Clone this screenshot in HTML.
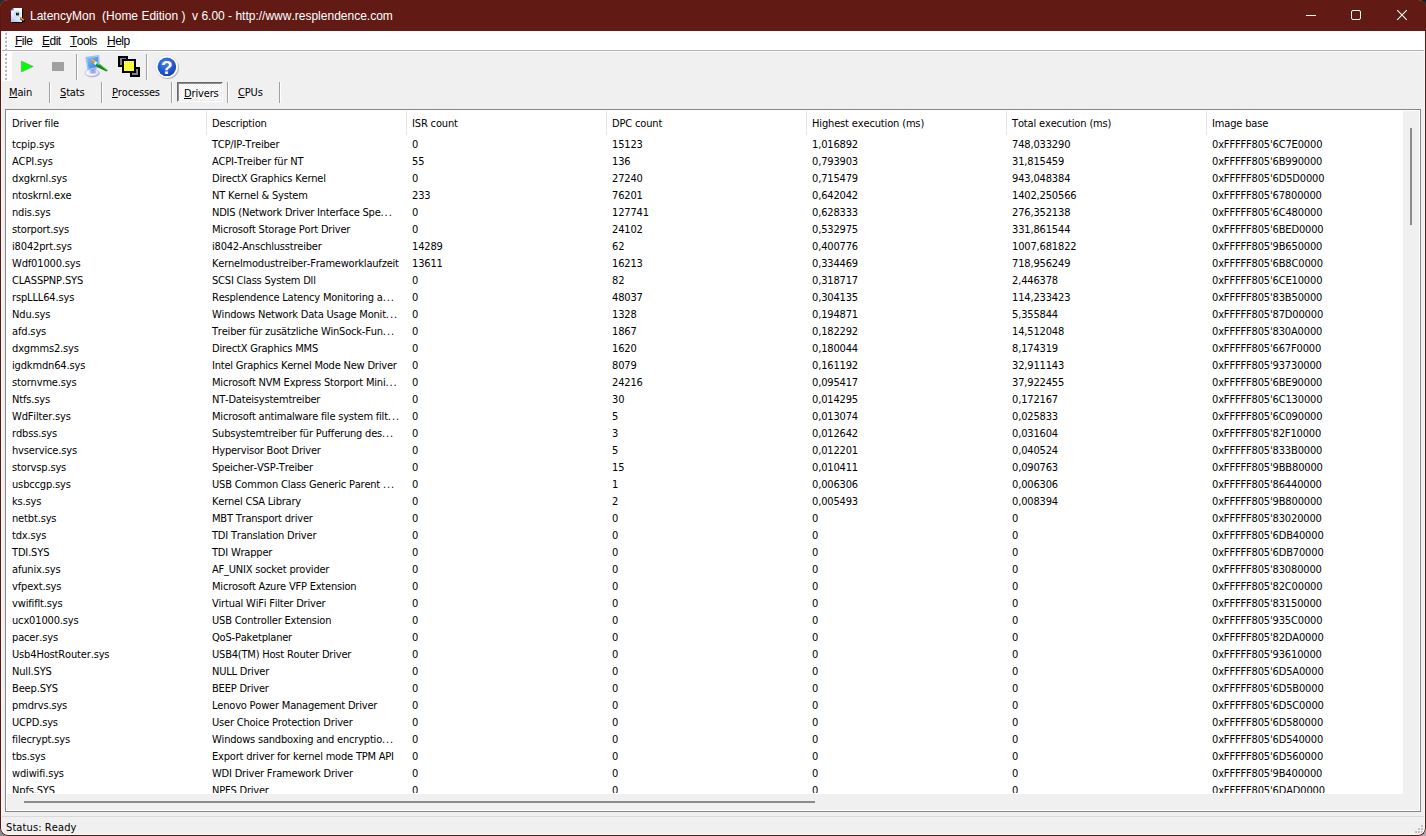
<!DOCTYPE html>
<html lang="de">
<head>
<meta charset="utf-8">
<title>LatencyMon</title>
<style>
html,body{margin:0;padding:0;}
body{width:1426px;height:836px;overflow:hidden;position:relative;background:#f0f0f0;font-family:"DejaVu Sans Condensed","Liberation Sans",sans-serif;font-size:11px;letter-spacing:-0.15px;font-kerning:none;color:#000;}
.corner{position:absolute;width:10px;height:10px;}
#win{position:absolute;left:0;top:0;width:1426px;height:836px;box-sizing:border-box;border-radius:8px;overflow:hidden;background:#f0f0f0;}
#frame{position:absolute;left:0;top:0;width:1426px;height:836px;box-sizing:border-box;border:1px solid #5e150d;border-top:none;border-radius:8px;pointer-events:none;z-index:50;}
#title{position:absolute;left:0;top:0;width:1426px;height:31px;background:#611b14;}
#title .txt{position:absolute;left:30px;top:9px;line-height:15px;font-size:12px;color:#fff;white-space:pre;font-family:"Liberation Sans",sans-serif;letter-spacing:0;}
#menu{position:absolute;left:1px;top:31px;width:1424px;height:19px;background:#fff;}
#menu span{position:absolute;top:3px;line-height:14px;white-space:pre;font-family:"Liberation Sans",sans-serif;font-size:12px;letter-spacing:-0.5px;}
u{text-decoration:underline;text-decoration-thickness:1px;text-underline-offset:1px;text-decoration-skip-ink:none;}
#menuline{position:absolute;left:1px;top:50px;width:1424px;height:1px;background:#b4b4b4;}
#menuline2{position:absolute;left:1px;top:51px;width:1424px;height:1px;background:#fafafa;}
#grip{position:absolute;left:1px;top:51px;width:11px;height:30px;background:#fff;}
.sep{position:absolute;width:1px;background:#a0a0a0;border-right:1px solid #fff;}
#lv{position:absolute;left:5px;top:109px;width:1416px;height:703px;box-sizing:border-box;border:1px solid #828790;background:#fff;}
#lvin{position:absolute;left:1px;top:1px;width:1412px;height:699px;overflow:hidden;background:#fff;}
#hdr{position:absolute;left:0;top:0;width:1395px;height:25px;}
#hdr span{position:absolute;top:4px;line-height:17px;white-space:pre;}
.hs{position:absolute;top:0;width:1px;height:24px;background:#e5e5e5;}
#rows{position:absolute;left:0;top:25px;width:1396px;height:657px;overflow:hidden;}
.r{position:relative;height:17px;line-height:17px;}
.c{position:absolute;top:0;white-space:pre;}
.e{letter-spacing:0.9px;}
.c0{left:5px}.c1{left:205px;letter-spacing:-0.2px}.c2{left:405px}.c3{left:605px}.c4{left:805px}.c5{left:1005px}.c6{left:1205px}
#vs{position:absolute;left:1396px;top:0;width:16px;height:683px;background:#f0f0f0;}
#vs i{position:absolute;left:7px;top:17px;width:2px;height:97px;background:#8b8b8b;}
#hsb{position:absolute;left:0;top:683px;width:1412px;height:16px;background:#f0f0f0;}
#hsb i{position:absolute;left:17px;top:7px;width:791px;height:2px;background:#8b8b8b;}
#stline{position:absolute;left:2px;top:816px;width:1422px;height:1px;background:#dadada;}
#status{position:absolute;left:6px;top:820px;letter-spacing:0.1px;line-height:15px;white-space:pre;}
.tab{position:absolute;top:85px;line-height:15px;white-space:pre;}
</style>
</head>
<body>
<div class="corner" style="left:0;top:0;background:#2b2b2b"></div>
<div class="corner" style="right:0;top:0;background:#1e1e1e"></div>
<div class="corner" style="left:0;bottom:0;background:#8c8c8c"></div>
<div class="corner" style="right:0;bottom:0;background:#b0b0b0"></div>
<div id="win">
<div id="title"><span class="txt">LatencyMon  (Home Edition )  v 6.00 - http://www.resplendence.com</span>
<svg style="position:absolute;left:0;top:0" width="40" height="31" viewBox="0 0 40 31">
<defs><linearGradient id="pg" x1="0.7" y1="0" x2="0.2" y2="1"><stop offset="0" stop-color="#ffffff"/><stop offset="0.5" stop-color="#eef3ff"/><stop offset="1" stop-color="#b4c6f7"/></linearGradient></defs>
<rect x="12" y="9" width="11" height="13.8" fill="#000"/>
<path d="M13.5 8 L22 8 L22 22 L11 22 L11 10.5 Z" fill="url(#pg)"/>
<path d="M11 10.6 L13.6 8 L13.6 10.6 Z" fill="#3f7fe6"/>
<circle cx="17.2" cy="14" r="3" fill="#dff6fb" stroke="#a6d6e8" stroke-width="0.7"/>
<rect x="16" y="12.5" width="2.9" height="3" rx="0.7" fill="#161616"/><rect x="17" y="12.3" width="0.9" height="1" fill="#dff6fb"/>
<path d="M21 18.6 L24 21" stroke="#000" stroke-width="2" stroke-linecap="round"/>
<path d="M20.2 17.4 L23.2 19.8" stroke="#eea11e" stroke-width="1.6" stroke-linecap="round"/>
<path d="M19.2 16.4 L20.2 17.3" stroke="#f3e3c0" stroke-width="1.1"/>
</svg>
<svg style="position:absolute;left:1296px;top:0" width="130" height="31" viewBox="0 0 130 31" fill="none" stroke="#fff" stroke-width="1">
<path d="M10 15.5 H20"/>
<rect x="55.5" y="10.5" width="9" height="9" rx="1.5"/>
<path d="M101.2 10.2 L110.8 19.8 M110.8 10.2 L101.2 19.8" stroke-width="1.1"/>
</svg>

</div>
<div id="menu"><span style="left:14px"><u>F</u>ile</span><span style="left:41px"><u>E</u>dit</span><span style="left:69px"><u>T</u>ools</span><span style="left:106px"><u>H</u>elp</span></div>
<div id="menuline"></div><div id="menuline2"></div>
<div id="grip"></div>
<svg style="position:absolute;left:0;top:0;z-index:3" width="200" height="84" viewBox="0 0 200 84">
<defs>
<pattern id="chk" x="124" y="61" width="2" height="2" patternUnits="userSpaceOnUse"><rect width="2" height="2" fill="#ffff00"/><rect width="1" height="1" fill="#fff"/></pattern>
<radialGradient id="hb" cx="0.42" cy="0.3" r="0.85"><stop offset="0" stop-color="#4a82ea"/><stop offset="0.55" stop-color="#2257cc"/><stop offset="1" stop-color="#12358f"/></radialGradient>
<linearGradient id="scr" x1="0" y1="0" x2="1" y2="1"><stop offset="0" stop-color="#7cc0ff"/><stop offset="1" stop-color="#2f7fe6"/></linearGradient>
<radialGradient id="base" cx="0.4" cy="0.35" r="0.75"><stop offset="0" stop-color="#ffffff"/><stop offset="0.6" stop-color="#f0effb"/><stop offset="1" stop-color="#8386cf"/></radialGradient>
<linearGradient id="std" x1="0" y1="0" x2="1" y2="0"><stop offset="0" stop-color="#d8d6f6"/><stop offset="0.5" stop-color="#9a98e0"/><stop offset="1" stop-color="#c9c7f0"/></linearGradient>
</defs>
<rect x="5" y="33" width="2" height="2" fill="#b9b9b9"/><rect x="6" y="32" width="1" height="1" fill="#d4d4d4"/><rect x="5" y="37" width="2" height="2" fill="#b9b9b9"/><rect x="6" y="36" width="1" height="1" fill="#d4d4d4"/><rect x="5" y="41" width="2" height="2" fill="#b9b9b9"/><rect x="6" y="40" width="1" height="1" fill="#d4d4d4"/><rect x="5" y="45" width="2" height="2" fill="#b9b9b9"/><rect x="6" y="44" width="1" height="1" fill="#d4d4d4"/><rect x="5" y="49" width="2" height="2" fill="#b9b9b9"/><rect x="6" y="48" width="1" height="1" fill="#d4d4d4"/><rect x="5" y="54" width="2" height="2" fill="#b9b9b9"/><rect x="6" y="53" width="1" height="1" fill="#d4d4d4"/><rect x="5" y="58" width="2" height="2" fill="#b9b9b9"/><rect x="6" y="57" width="1" height="1" fill="#d4d4d4"/><rect x="5" y="62" width="2" height="2" fill="#b9b9b9"/><rect x="6" y="61" width="1" height="1" fill="#d4d4d4"/><rect x="5" y="66" width="2" height="2" fill="#b9b9b9"/><rect x="6" y="65" width="1" height="1" fill="#d4d4d4"/><rect x="5" y="70" width="2" height="2" fill="#b9b9b9"/><rect x="6" y="69" width="1" height="1" fill="#d4d4d4"/><rect x="5" y="74" width="2" height="2" fill="#b9b9b9"/><rect x="6" y="73" width="1" height="1" fill="#d4d4d4"/><rect x="5" y="78" width="2" height="2" fill="#b9b9b9"/><rect x="6" y="77" width="1" height="1" fill="#d4d4d4"/>
<!-- play -->
<path d="M21.3 61 L33.2 66.5 L21.3 72 Z" fill="#00ff00" stroke="#6a8a6a" stroke-width="0.5"/>
<!-- stop -->
<rect x="52" y="62" width="12" height="9" fill="#a0a0a0"/>
<!-- monitor icon -->
<ellipse cx="92.2" cy="73" rx="7.3" ry="3.9" fill="url(#base)" stroke="#9a9cd8" stroke-width="0.5"/>
<path d="M90 67 L95.6 67 L96.6 73.6 L89 73.6 Z" fill="url(#std)"/>
<path d="M85.8 57.3 L98.9 55.4 L99.5 67.6 L87.8 70 Z" fill="#a6d2fb" stroke="#6ea6ea" stroke-width="0.5"/>
<path d="M87 58.3 L98 56.7 L98.4 66.8 L88.6 68.8 Z" fill="url(#scr)"/>
<path d="M91.6 60.3 L95.4 62.9" stroke="#d9981a" stroke-width="3.2" stroke-linecap="butt"/>
<path d="M91.2 59.4 L95.8 61.9" stroke="#f2c662" stroke-width="0.8"/>
<path d="M94.8 62.5 L97.4 64.4" stroke="#f4f6ff" stroke-width="2.8"/>
<path d="M96.6 63.2 L100.5 64.6 L107.8 70.4 L106.6 71.6 L99 68 L95.8 65.8 Z" fill="#16861a"/>
<path d="M97 63.8 L100.6 65.2 L107 70.2" stroke="#58d058" stroke-width="1" fill="none"/>
<!-- copy icon -->
<rect x="119" y="57" width="8" height="9" fill="#808080" stroke="#000" stroke-width="2"/>
<rect x="131" y="68" width="8" height="8" fill="#808080" stroke="#000" stroke-width="2"/>
<rect x="123" y="60" width="12" height="12" fill="url(#chk)" stroke="#000" stroke-width="2"/>
<!-- help icon -->
<circle cx="167.8" cy="67.8" r="11.2" fill="#8a8a8a" opacity="0.6"/>
<circle cx="166.9" cy="66.8" r="11.3" fill="#fff" stroke="#c9c9d2" stroke-width="0.4"/>
<circle cx="166.9" cy="66.8" r="9.3" fill="url(#hb)"/>
<text x="166.9" y="73.6" text-anchor="middle" font-family="Liberation Sans, sans-serif" font-weight="bold" font-size="19" fill="#fff" letter-spacing="0">?</text>
</svg>
<div class="sep" style="left:76px;top:54px;height:26px"></div>
<div class="sep" style="left:146px;top:54px;height:26px"></div>
<div class="sep" style="left:49px;top:82px;height:21px"></div>
<div class="sep" style="left:101px;top:82px;height:21px"></div>
<div class="sep" style="left:171px;top:82px;height:21px"></div>
<div class="sep" style="left:227px;top:82px;height:21px"></div>
<div class="sep" style="left:279px;top:82px;height:21px"></div>
<span class="tab" style="left:9px"><u>M</u>ain</span>
<span class="tab" style="left:60px"><u>S</u>tats</span>
<span class="tab" style="left:112px"><u>P</u>rocesses</span>
<div id="drvbtn" style="position:absolute;left:177px;top:82px;width:46px;height:20px;box-sizing:border-box;border:1px solid;border-color:#696969 #fff #fff #696969;background:repeating-conic-gradient(#fff 0 25%,#f0f0f0 0 50%) 0 0/2px 2px;"><div style="position:absolute;left:0;top:0;right:0;bottom:0;border:1px solid;border-color:#8e8e8e #ececec #ececec #8e8e8e;"></div></div>
<span class="tab" style="left:184px;top:86px"><u>D</u>rivers</span>
<span class="tab" style="left:238px"><u>C</u>PUs</span>
<div id="lv"><div id="lvin">
<div id="hdr">
<span style="left:5px">Driver file</span><span style="left:205px">Description</span><span style="left:405px">ISR count</span><span style="left:605px">DPC count</span><span style="left:805px">Highest execution (ms)</span><span style="left:1005px">Total execution (ms)</span><span style="left:1205px">Image base</span>
<i class="hs" style="left:199px"></i><i class="hs" style="left:399px"></i><i class="hs" style="left:599px"></i><i class="hs" style="left:799px"></i><i class="hs" style="left:999px"></i><i class="hs" style="left:1199px"></i>
</div>
<div id="rows">
<div class="r"><span class="c c0">tcpip.sys</span><span class="c c1">TCP/IP-Treiber</span><span class="c c2">0</span><span class="c c3">15123</span><span class="c c4">1,016892</span><span class="c c5">748,033290</span><span class="c c6">0xFFFFF805'6C7E0000</span></div>
<div class="r"><span class="c c0">ACPI.sys</span><span class="c c1">ACPI-Treiber für NT</span><span class="c c2">55</span><span class="c c3">136</span><span class="c c4">0,793903</span><span class="c c5">31,815459</span><span class="c c6">0xFFFFF805'6B990000</span></div>
<div class="r"><span class="c c0">dxgkrnl.sys</span><span class="c c1">DirectX Graphics Kernel</span><span class="c c2">0</span><span class="c c3">27240</span><span class="c c4">0,715479</span><span class="c c5">943,048384</span><span class="c c6">0xFFFFF805'6D5D0000</span></div>
<div class="r"><span class="c c0">ntoskrnl.exe</span><span class="c c1">NT Kernel &amp; System</span><span class="c c2">233</span><span class="c c3">76201</span><span class="c c4">0,642042</span><span class="c c5">1402,250566</span><span class="c c6">0xFFFFF805'67800000</span></div>
<div class="r"><span class="c c0">ndis.sys</span><span class="c c1">NDIS (Network Driver Interface Spe<span class="e">...</span></span><span class="c c2">0</span><span class="c c3">127741</span><span class="c c4">0,628333</span><span class="c c5">276,352138</span><span class="c c6">0xFFFFF805'6C480000</span></div>
<div class="r"><span class="c c0">storport.sys</span><span class="c c1">Microsoft Storage Port Driver</span><span class="c c2">0</span><span class="c c3">24102</span><span class="c c4">0,532975</span><span class="c c5">331,861544</span><span class="c c6">0xFFFFF805'6BED0000</span></div>
<div class="r"><span class="c c0">i8042prt.sys</span><span class="c c1">i8042-Anschlusstreiber</span><span class="c c2">14289</span><span class="c c3">62</span><span class="c c4">0,400776</span><span class="c c5">1007,681822</span><span class="c c6">0xFFFFF805'9B650000</span></div>
<div class="r"><span class="c c0">Wdf01000.sys</span><span class="c c1">Kernelmodustreiber-Frameworklaufzeit</span><span class="c c2">13611</span><span class="c c3">16213</span><span class="c c4">0,334469</span><span class="c c5">718,956249</span><span class="c c6">0xFFFFF805'6B8C0000</span></div>
<div class="r"><span class="c c0">CLASSPNP.SYS</span><span class="c c1">SCSI Class System Dll</span><span class="c c2">0</span><span class="c c3">82</span><span class="c c4">0,318717</span><span class="c c5">2,446378</span><span class="c c6">0xFFFFF805'6CE10000</span></div>
<div class="r"><span class="c c0">rspLLL64.sys</span><span class="c c1">Resplendence Latency Monitoring a<span class="e">...</span></span><span class="c c2">0</span><span class="c c3">48037</span><span class="c c4">0,304135</span><span class="c c5">114,233423</span><span class="c c6">0xFFFFF805'83B50000</span></div>
<div class="r"><span class="c c0">Ndu.sys</span><span class="c c1">Windows Network Data Usage Monit<span class="e">...</span></span><span class="c c2">0</span><span class="c c3">1328</span><span class="c c4">0,194871</span><span class="c c5">5,355844</span><span class="c c6">0xFFFFF805'87D00000</span></div>
<div class="r"><span class="c c0">afd.sys</span><span class="c c1">Treiber für zusätzliche WinSock-Fun<span class="e">...</span></span><span class="c c2">0</span><span class="c c3">1867</span><span class="c c4">0,182292</span><span class="c c5">14,512048</span><span class="c c6">0xFFFFF805'830A0000</span></div>
<div class="r"><span class="c c0">dxgmms2.sys</span><span class="c c1">DirectX Graphics MMS</span><span class="c c2">0</span><span class="c c3">1620</span><span class="c c4">0,180044</span><span class="c c5">8,174319</span><span class="c c6">0xFFFFF805'667F0000</span></div>
<div class="r"><span class="c c0">igdkmdn64.sys</span><span class="c c1">Intel Graphics Kernel Mode New Driver</span><span class="c c2">0</span><span class="c c3">8079</span><span class="c c4">0,161192</span><span class="c c5">32,911143</span><span class="c c6">0xFFFFF805'93730000</span></div>
<div class="r"><span class="c c0">stornvme.sys</span><span class="c c1">Microsoft NVM Express Storport Mini<span class="e">...</span></span><span class="c c2">0</span><span class="c c3">24216</span><span class="c c4">0,095417</span><span class="c c5">37,922455</span><span class="c c6">0xFFFFF805'6BE90000</span></div>
<div class="r"><span class="c c0">Ntfs.sys</span><span class="c c1">NT-Dateisystemtreiber</span><span class="c c2">0</span><span class="c c3">30</span><span class="c c4">0,014295</span><span class="c c5">0,172167</span><span class="c c6">0xFFFFF805'6C130000</span></div>
<div class="r"><span class="c c0">WdFilter.sys</span><span class="c c1">Microsoft antimalware file system filt<span class="e">...</span></span><span class="c c2">0</span><span class="c c3">5</span><span class="c c4">0,013074</span><span class="c c5">0,025833</span><span class="c c6">0xFFFFF805'6C090000</span></div>
<div class="r"><span class="c c0">rdbss.sys</span><span class="c c1">Subsystemtreiber für Pufferung des<span class="e">...</span></span><span class="c c2">0</span><span class="c c3">3</span><span class="c c4">0,012642</span><span class="c c5">0,031604</span><span class="c c6">0xFFFFF805'82F10000</span></div>
<div class="r"><span class="c c0">hvservice.sys</span><span class="c c1">Hypervisor Boot Driver</span><span class="c c2">0</span><span class="c c3">5</span><span class="c c4">0,012201</span><span class="c c5">0,040524</span><span class="c c6">0xFFFFF805'833B0000</span></div>
<div class="r"><span class="c c0">storvsp.sys</span><span class="c c1">Speicher-VSP-Treiber</span><span class="c c2">0</span><span class="c c3">15</span><span class="c c4">0,010411</span><span class="c c5">0,090763</span><span class="c c6">0xFFFFF805'9BB80000</span></div>
<div class="r"><span class="c c0">usbccgp.sys</span><span class="c c1">USB Common Class Generic Parent <span class="e">...</span></span><span class="c c2">0</span><span class="c c3">1</span><span class="c c4">0,006306</span><span class="c c5">0,006306</span><span class="c c6">0xFFFFF805'86440000</span></div>
<div class="r"><span class="c c0">ks.sys</span><span class="c c1">Kernel CSA Library</span><span class="c c2">0</span><span class="c c3">2</span><span class="c c4">0,005493</span><span class="c c5">0,008394</span><span class="c c6">0xFFFFF805'9B800000</span></div>
<div class="r"><span class="c c0">netbt.sys</span><span class="c c1">MBT Transport driver</span><span class="c c2">0</span><span class="c c3">0</span><span class="c c4">0</span><span class="c c5">0</span><span class="c c6">0xFFFFF805'83020000</span></div>
<div class="r"><span class="c c0">tdx.sys</span><span class="c c1">TDI Translation Driver</span><span class="c c2">0</span><span class="c c3">0</span><span class="c c4">0</span><span class="c c5">0</span><span class="c c6">0xFFFFF805'6DB40000</span></div>
<div class="r"><span class="c c0">TDI.SYS</span><span class="c c1">TDI Wrapper</span><span class="c c2">0</span><span class="c c3">0</span><span class="c c4">0</span><span class="c c5">0</span><span class="c c6">0xFFFFF805'6DB70000</span></div>
<div class="r"><span class="c c0">afunix.sys</span><span class="c c1">AF_UNIX socket provider</span><span class="c c2">0</span><span class="c c3">0</span><span class="c c4">0</span><span class="c c5">0</span><span class="c c6">0xFFFFF805'83080000</span></div>
<div class="r"><span class="c c0">vfpext.sys</span><span class="c c1">Microsoft Azure VFP Extension</span><span class="c c2">0</span><span class="c c3">0</span><span class="c c4">0</span><span class="c c5">0</span><span class="c c6">0xFFFFF805'82C00000</span></div>
<div class="r"><span class="c c0">vwififlt.sys</span><span class="c c1">Virtual WiFi Filter Driver</span><span class="c c2">0</span><span class="c c3">0</span><span class="c c4">0</span><span class="c c5">0</span><span class="c c6">0xFFFFF805'83150000</span></div>
<div class="r"><span class="c c0">ucx01000.sys</span><span class="c c1">USB Controller Extension</span><span class="c c2">0</span><span class="c c3">0</span><span class="c c4">0</span><span class="c c5">0</span><span class="c c6">0xFFFFF805'935C0000</span></div>
<div class="r"><span class="c c0">pacer.sys</span><span class="c c1">QoS-Paketplaner</span><span class="c c2">0</span><span class="c c3">0</span><span class="c c4">0</span><span class="c c5">0</span><span class="c c6">0xFFFFF805'82DA0000</span></div>
<div class="r"><span class="c c0">Usb4HostRouter.sys</span><span class="c c1">USB4(TM) Host Router Driver</span><span class="c c2">0</span><span class="c c3">0</span><span class="c c4">0</span><span class="c c5">0</span><span class="c c6">0xFFFFF805'93610000</span></div>
<div class="r"><span class="c c0">Null.SYS</span><span class="c c1">NULL Driver</span><span class="c c2">0</span><span class="c c3">0</span><span class="c c4">0</span><span class="c c5">0</span><span class="c c6">0xFFFFF805'6D5A0000</span></div>
<div class="r"><span class="c c0">Beep.SYS</span><span class="c c1">BEEP Driver</span><span class="c c2">0</span><span class="c c3">0</span><span class="c c4">0</span><span class="c c5">0</span><span class="c c6">0xFFFFF805'6D5B0000</span></div>
<div class="r"><span class="c c0">pmdrvs.sys</span><span class="c c1">Lenovo Power Management Driver</span><span class="c c2">0</span><span class="c c3">0</span><span class="c c4">0</span><span class="c c5">0</span><span class="c c6">0xFFFFF805'6D5C0000</span></div>
<div class="r"><span class="c c0">UCPD.sys</span><span class="c c1">User Choice Protection Driver</span><span class="c c2">0</span><span class="c c3">0</span><span class="c c4">0</span><span class="c c5">0</span><span class="c c6">0xFFFFF805'6D580000</span></div>
<div class="r"><span class="c c0">filecrypt.sys</span><span class="c c1">Windows sandboxing and encryptio<span class="e">...</span></span><span class="c c2">0</span><span class="c c3">0</span><span class="c c4">0</span><span class="c c5">0</span><span class="c c6">0xFFFFF805'6D540000</span></div>
<div class="r"><span class="c c0">tbs.sys</span><span class="c c1">Export driver for kernel mode TPM API</span><span class="c c2">0</span><span class="c c3">0</span><span class="c c4">0</span><span class="c c5">0</span><span class="c c6">0xFFFFF805'6D560000</span></div>
<div class="r"><span class="c c0">wdiwifi.sys</span><span class="c c1">WDI Driver Framework Driver</span><span class="c c2">0</span><span class="c c3">0</span><span class="c c4">0</span><span class="c c5">0</span><span class="c c6">0xFFFFF805'9B400000</span></div>
<div class="r"><span class="c c0">Npfs.SYS</span><span class="c c1">NPFS Driver</span><span class="c c2">0</span><span class="c c3">0</span><span class="c c4">0</span><span class="c c5">0</span><span class="c c6">0xFFFFF805'6DAD0000</span></div>
</div>
<div id="vs"><i></i></div>
<div id="hsb"><i></i></div>
</div></div>
<div id="stline"></div>
<span id="status">Status: Ready</span>
<i style="position:absolute;left:1421px;top:825px;width:2px;height:2px;background:#bfbfbf"></i><i style="position:absolute;left:1418px;top:828px;width:2px;height:2px;background:#bfbfbf"></i><i style="position:absolute;left:1421px;top:828px;width:2px;height:2px;background:#bfbfbf"></i><i style="position:absolute;left:1415px;top:831px;width:2px;height:2px;background:#bfbfbf"></i><i style="position:absolute;left:1418px;top:831px;width:2px;height:2px;background:#bfbfbf"></i><i style="position:absolute;left:1421px;top:831px;width:2px;height:2px;background:#bfbfbf"></i><div style="position:absolute;left:1px;top:31px;width:1424px;height:804px;box-sizing:border-box;border:1px solid #fdfdfd;border-top:none;border-radius:0 0 7px 7px;pointer-events:none;z-index:40"></div>
</div>
<div id="frame"></div>
</body>
</html>
